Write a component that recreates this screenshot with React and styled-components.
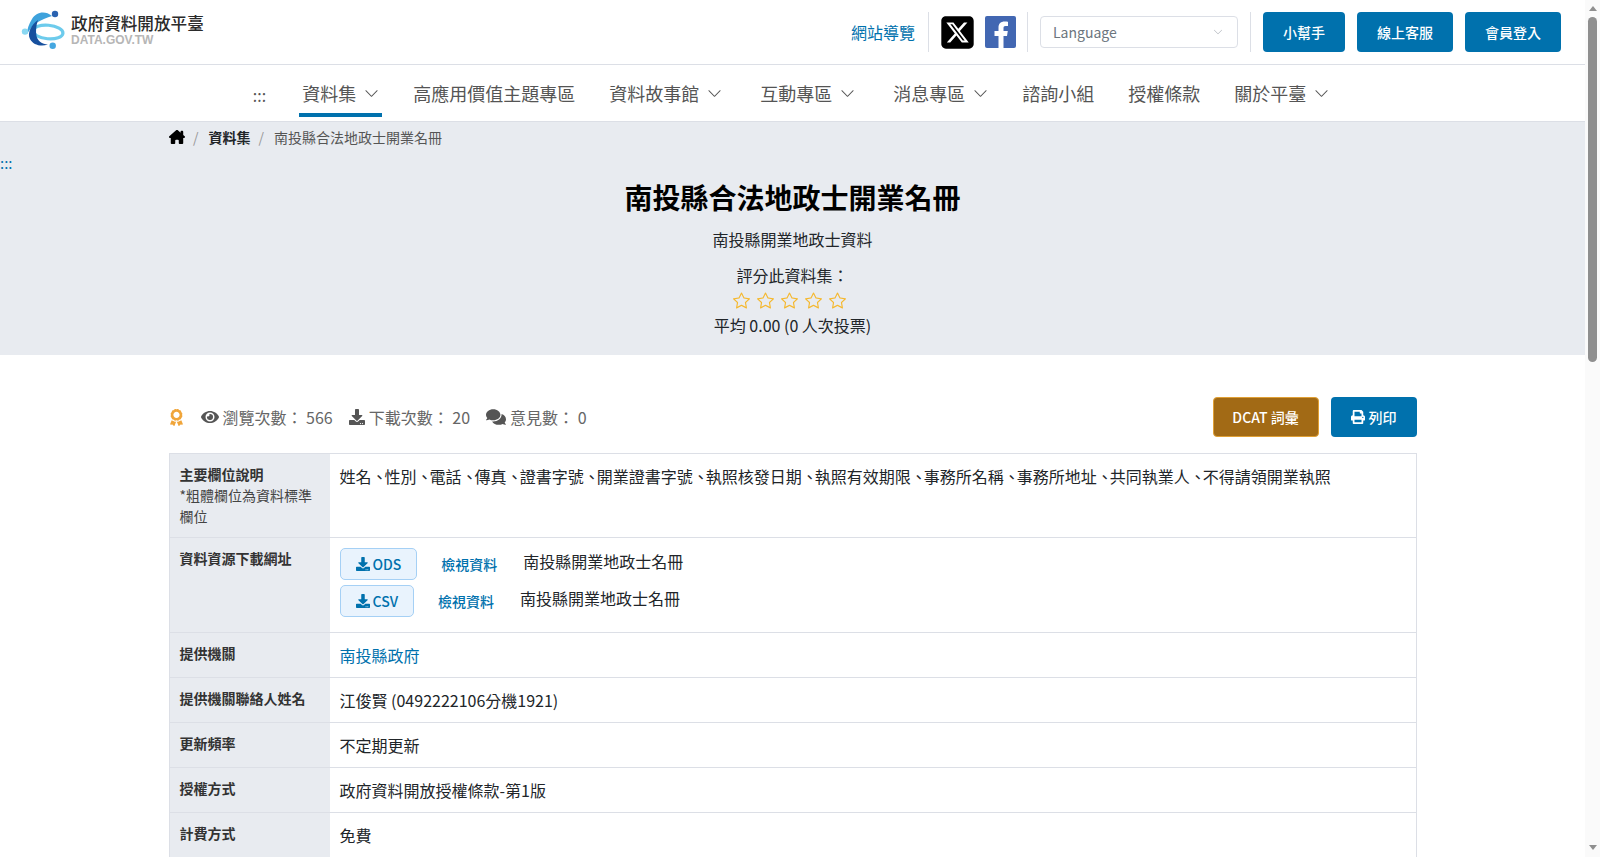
import React from 'react'
import styled, { createGlobalStyle } from 'styled-components'
import { FaEye, FaDownload, FaComments, FaPrint, FaAward } from 'react-icons/fa'
import { FaSquareXTwitter, FaHouseChimney } from 'react-icons/fa6'
import { BsStar, BsChevronDown } from 'react-icons/bs'

const BLUE = '#0071ad'
const PANEL = '#e8ebf0'
const LINE = '#dcdfe6'

const GlobalStyle = createGlobalStyle`
  html, body {
    margin: 0;
    padding: 0;
    background: #fff;
  }
  body {
    font-family: "Noto Sans CJK TC", "Noto Sans", sans-serif;
    font-size: 16px;
    line-height: 1.5;
    color: #212529;
  }
  * {
    box-sizing: border-box;
  }
`

const navItems = [
  { label: '資料集', sub: true, active: true },
  { label: '高應用價值主題專區' },
  { label: '資料故事館', sub: true, wide: true },
  { label: '互動專區', sub: true, wide: true },
  { label: '消息專區', sub: true },
  { label: '諮詢小組' },
  { label: '授權條款' },
  { label: '關於平臺', sub: true },
]

const fields = ['姓名', '性別', '電話', '傳真', '證書字號', '開業證書字號', '執照核發日期', '執照有效期限', '事務所名稱', '事務所地址', '共同執業人', '不得請領開業執照']

const rows = [
  { label: '提供機關', value: '南投縣政府', link: true },
  { label: '提供機關聯絡人姓名', value: '江俊賢 (0492222106分機1921)' },
  { label: '更新頻率', value: '不定期更新' },
  { label: '授權方式', value: '政府資料開放授權條款-第1版' },
  { label: '計費方式', value: '免費' },
]

const Logo = () => (
  <LogoWrap href="#">
    <svg width="50" height="44" viewBox="0 0 50 44">
      <ellipse cx="28" cy="23" rx="15" ry="6.8" fill="none" stroke="#6dcbec" strokeWidth="3.2" transform="rotate(5 28 23)" />
      <path d="M32 7 C25 1 16 3 12 10 C9 15 7 20 7 25 C10 20 13 16 17 13.5 C22 10.5 27 8.5 32 7 Z" fill="#3ea2dc" />
      <path d="M18 11 C11 16 7 24 10 30 C13 36 21 38 28 35.5 C22 35 17.5 32 16.5 27 C15.5 22 16 17 18 11 Z" fill="#17509e" />
      <circle cx="35" cy="5" r="3.2" fill="#2a62b0" />
      <circle cx="5" cy="22.6" r="3.2" fill="#8ad8f2" />
      <circle cx="32.7" cy="36.7" r="3.2" fill="#45a7e0" />
    </svg>
    <LogoText>
      <LogoName>政府資料開放平臺</LogoName>
      <LogoSub>DATA.GOV.TW</LogoSub>
    </LogoText>
  </LogoWrap>
)

const FacebookIcon = () => (
  <svg width="31" height="32" viewBox="0 0 31 32">
    <rect width="31" height="32" rx="2" fill="#4267b2" />
    <path d="M13.5 32 V20 H9.5 V15 H13.5 V11.5 C13.5 7.5 16 5.5 19.5 5.5 C21 5.5 22.5 5.7 23 5.8 V10 H20.5 C19 10 18.5 10.8 18.5 12 V15 H22.8 L22 20 H18.5 V32 Z" fill="#fff" />
  </svg>
)

const App = () => (
  <Page>
    <GlobalStyle />
    <TopBar>
      <Logo />
      <TopTools>
        <SiteMap href="#">網站導覽</SiteMap>
        <Divider />
        <Social>
          <FaSquareXTwitter size={37} color="#000" />
          <FacebookIcon />
        </Social>
        <Divider />
        <LangSelect>
          Language
          <BsChevronDown size={10} color="#a9adb5" />
        </LangSelect>
        <Divider />
        <TopButton>小幫手</TopButton>
        <TopButton>線上客服</TopButton>
        <TopButton>會員登入</TopButton>
      </TopTools>
    </TopBar>

    <Nav>
      <NavDots>:::</NavDots>
      {navItems.map((item) => (
        <NavItem key={item.label} $active={item.active} $wide={item.wide}>
          {item.label}
          {item.sub && <BsChevronDown size={15} />}
        </NavItem>
      ))}
    </Nav>

    <Hero>
      <Breadcrumb>
        <FaHouseChimney size={16} color="#000" />
        <Slash>/</Slash>
        <strong>資料集</strong>
        <Slash>/</Slash>
        <span>南投縣合法地政士開業名冊</span>
      </Breadcrumb>
      <SkipDots>:::</SkipDots>
      <Title>南投縣合法地政士開業名冊</Title>
      <Subtitle>南投縣開業地政士資料</Subtitle>
      <RateLabel>評分此資料集：</RateLabel>
      <Stars>
        {[1, 2, 3, 4, 5].map((n) => (
          <BsStar key={n} size={17} color="#f5b82e" />
        ))}
      </Stars>
      <Average>平均 0.00 (0 人次投票)</Average>
    </Hero>

    <Main>
      <StatBar>
        <Stats>
          <AwardIcon><FaAward size={17} color="#f0a53a" /></AwardIcon>
          <Stat><FaEye size={18} />瀏覽次數： 566</Stat>
          <Stat><FaDownload size={16} />下載次數： 20</Stat>
          <Stat><FaComments size={20} />意見數： 0</Stat>
        </Stats>
        <Actions>
          <DcatButton>DCAT 詞彙</DcatButton>
          <PrintButton><FaPrint size={14} />列印</PrintButton>
        </Actions>
      </StatBar>

      <Table>
        <Row>
          <Head>
            <strong>主要欄位說明</strong>
            <br />
            *粗體欄位為資料標準欄位
          </Head>
          <Value>
            {fields.map((field, i) => (
              <React.Fragment key={field}>
                {i > 0 && <Comma>、</Comma>}
                {field}
              </React.Fragment>
            ))}
          </Value>
        </Row>
        <Row>
          <Head><strong>資料資源下載網址</strong></Head>
          <Value>
            <Resource>
              <FileButton><FaDownload size={14} />ODS</FileButton>
              <ViewLink href="#">檢視資料</ViewLink>
              <ResourceName>南投縣開業地政士名冊</ResourceName>
            </Resource>
            <Resource>
              <FileButton><FaDownload size={14} />CSV</FileButton>
              <ViewLink href="#">檢視資料</ViewLink>
              <ResourceName>南投縣開業地政士名冊</ResourceName>
            </Resource>
          </Value>
        </Row>
        {rows.map((row) => (
          <Row key={row.label}>
            <Head><strong>{row.label}</strong></Head>
            <Value>{row.link ? <TextLink href="#">{row.value}</TextLink> : row.value}</Value>
          </Row>
        ))}
      </Table>
    </Main>

    <ScrollRail>
      <ScrollUp />
      <ScrollThumb />
      <ScrollDown />
    </ScrollRail>
  </Page>
)

const Page = styled.div`
  min-height: 2060px;
  margin-right: 15px;
`

const TopBar = styled.header`
  display: flex;
  justify-content: space-between;
  align-items: center;
  height: 65px;
  padding: 0 24px 0 20px;
  border-bottom: 1px solid ${LINE};
`

const LogoWrap = styled.a`
  display: flex;
  align-items: center;
  gap: 1px;
  margin-top: -2px;
  text-decoration: none;
`

const LogoText = styled.div`
  display: flex;
  flex-direction: column;
  margin-top: -3px;
`

const LogoName = styled.span`
  font-size: 16.6px;
  line-height: 20px;
  font-weight: 500;
  color: #2b2b2b;
`

const LogoSub = styled.span`
  margin-top: 1px;
  font-family: "Liberation Sans", sans-serif;
  font-size: 12px;
  line-height: 13px;
  font-weight: 700;
  color: #b6b6b6;
`

const TopTools = styled.div`
  display: flex;
  align-items: center;
`

const SiteMap = styled.a`
  color: ${BLUE};
  text-decoration: none;
  margin-right: 13px;
`

const Divider = styled.span`
  width: 1px;
  height: 40px;
  background: ${LINE};
`

const Social = styled.div`
  display: flex;
  align-items: center;
  gap: 9px;
  margin: 0 11px 0 10px;
`

const LangSelect = styled.div`
  display: flex;
  justify-content: space-between;
  align-items: center;
  width: 198px;
  height: 32px;
  margin: 0 12px;
  padding: 0 14px 0 12px;
  border: 1px solid ${LINE};
  border-radius: 4px;
  font-size: 14px;
  color: #6c757d;
`

const TopButton = styled.button`
  height: 40px;
  margin-left: 12px;
  padding: 0 20px;
  border: 0;
  border-radius: 4px;
  background: ${BLUE};
  color: #fff;
  font: 500 14px "Noto Sans CJK TC", sans-serif;
`

const Nav = styled.nav`
  display: flex;
  justify-content: center;
  gap: 28px;
  height: 57px;
  border-bottom: 1px solid ${LINE};
`

const NavDots = styled.span`
  align-self: center;
  margin-right: 5px;
  padding-top: 3px;
  font-size: 16px;
  color: #555;
`

const NavItem = styled.a`
  display: flex;
  align-items: center;
  gap: 8px;
  height: 52px;
  margin-right: ${(props) => (props.$wide ? '4px' : '0')};
  padding: 8px 3px 0;
  border-bottom: 4px solid ${(props) => (props.$active ? BLUE : 'transparent')};
  font-size: 18px;
  color: #555;
`

const Hero = styled.section`
  display: flex;
  flex-direction: column;
  align-items: center;
  position: relative;
  height: 233px;
  background: ${PANEL};
`

const Breadcrumb = styled.div`
  display: flex;
  align-items: center;
  align-self: flex-start;
  gap: 8px;
  height: 30px;
  margin-left: 169px;
  font-size: 14px;
  color: #555;
  strong {
    color: #212529;
  }
`

const Slash = styled.span`
  margin-right: 2px;
  color: #999;
`

const SkipDots = styled.a`
  position: absolute;
  top: 30px;
  left: 0;
  font-size: 15px;
  color: ${BLUE};
`

const Title = styled.h1`
  margin: 24px 0 0;
  font-size: 28px;
  line-height: 42px;
  font-weight: 700;
  color: #000;
`

const Subtitle = styled.p`
  margin: 9px 0 0;
  line-height: 24px;
`

const RateLabel = styled.p`
  margin: 12px 0 0;
  line-height: 24px;
`

const Stars = styled.div`
  display: flex;
  gap: 7px;
  height: 26px;
  margin-right: 7px;
  align-items: center;
`

const Average = styled.p`
  margin: 0;
  line-height: 25px;
`

const Main = styled.main`
  width: 1248px;
  margin: 0 auto;
  padding-top: 42px;
`

const StatBar = styled.div`
  display: flex;
  justify-content: space-between;
  align-items: center;
  height: 40px;
  margin-bottom: 16px;
`

const Stats = styled.div`
  display: flex;
  align-items: center;
  gap: 16px;
  color: #666;
`

const AwardIcon = styled.span`
  display: flex;
  width: 17px;
  margin-left: -1px;
`

const Stat = styled.span`
  display: flex;
  align-items: center;
  gap: 4px;
  white-space: pre;
  svg {
    color: #555;
  }
`

const Actions = styled.div`
  display: flex;
  gap: 12px;
`

const DcatButton = styled.button`
  width: 106px;
  height: 40px;
  border: 1px solid #e0a035;
  border-radius: 4px;
  background: #a26a15;
  color: #fff;
  font: 500 14px "Noto Sans CJK TC", sans-serif;
`

const PrintButton = styled.button`
  display: flex;
  justify-content: center;
  align-items: center;
  gap: 4px;
  width: 86px;
  height: 40px;
  border: 0;
  border-radius: 4px;
  background: ${BLUE};
  color: #fff;
  font: 500 14px "Noto Sans CJK TC", sans-serif;
`

const Table = styled.div`
  border: 1px solid ${LINE};
  border-bottom: 0;
`

const Row = styled.div`
  display: grid;
  grid-template-columns: 160px 1fr;
  border-bottom: 1px solid ${LINE};
`

const Head = styled.div`
  padding: 10px;
  background: ${PANEL};
  font-size: 14px;
  line-height: 21px;
  color: #444;
  strong {
    color: #333;
  }
`

const Value = styled.div`
  padding: 10px;
  line-height: 24px;
`

const Comma = styled.span`
  letter-spacing: -3px;
`

const Resource = styled.div`
  display: flex;
  align-items: center;
  gap: 24px;
  height: 32px;
  & + & {
    margin: 5px 0;
  }
`

const ResourceName = styled.span`
  margin: 0 0 6px 2px;
`

const FileButton = styled.a`
  display: flex;
  align-items: center;
  gap: 3px;
  height: 32px;
  padding: 0 15px;
  border: 1px solid #a5d0f5;
  border-radius: 5px;
  background: #e9f3fd;
  font-size: 14px;
  font-weight: 500;
  color: ${BLUE};
`

const ViewLink = styled.a`
  font-size: 14px;
  font-weight: 500;
  color: ${BLUE};
  text-decoration: none;
`

const TextLink = styled.a`
  color: ${BLUE};
  text-decoration: none;
`

const ScrollRail = styled.div`
  position: fixed;
  top: 0;
  right: 0;
  bottom: 0;
  display: flex;
  flex-direction: column;
  align-items: center;
  width: 15px;
  padding: 6px 0 7px;
  background: #fafafa;
`

const ScrollUp = styled.span`
  border: solid transparent;
  border-width: 0 4.5px 5px;
  border-bottom-color: #8f8f8f;
`

const ScrollThumb = styled.span`
  width: 9.5px;
  height: 345px;
  margin-top: 6px;
  border-radius: 5px;
  background: #8f8f8f;
`

const ScrollDown = styled.span`
  margin-top: auto;
  border: solid transparent;
  border-width: 5px 4.5px 0;
  border-top-color: #8f8f8f;
`

export default App
